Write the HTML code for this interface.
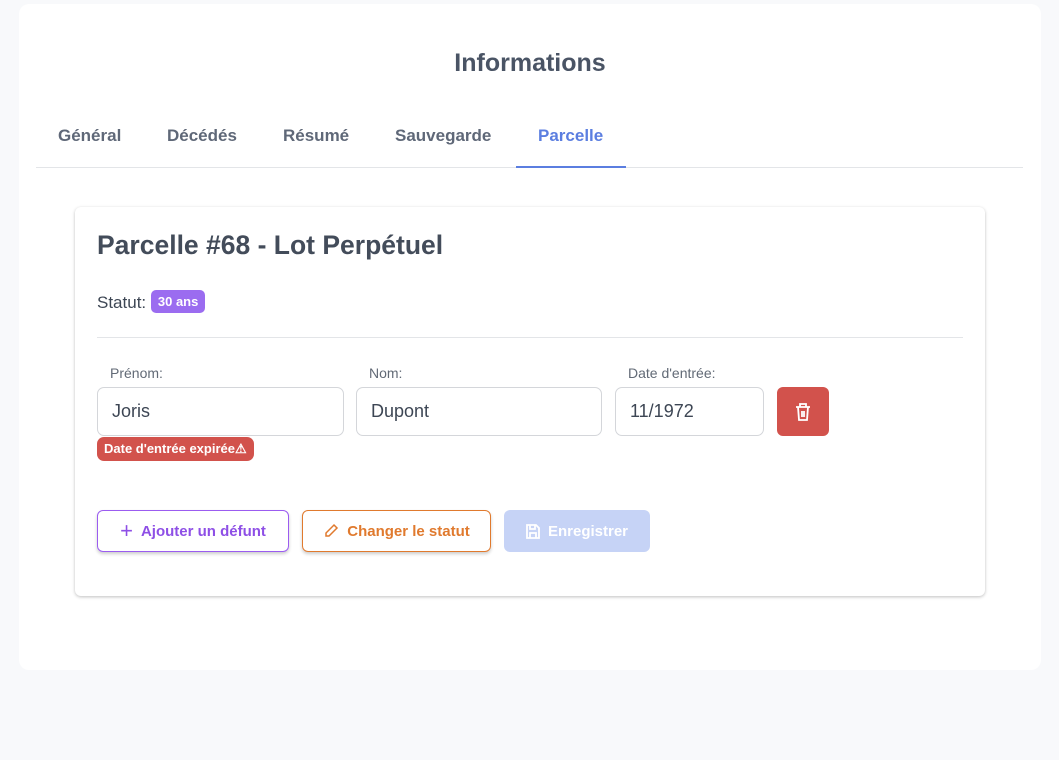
<!DOCTYPE html>
<html><head><meta charset="utf-8"><style>
*{box-sizing:border-box;margin:0;padding:0}
body{width:1059px;height:760px;background:#f8f9fb;font-family:"Liberation Sans",Arial,sans-serif;position:relative;overflow:hidden}
.main{position:absolute;left:19px;top:4px;width:1022px;height:666px;background:#fff;border-radius:10px}
h1{position:absolute;left:0;right:0;top:45px;text-align:center;font-size:25px;font-weight:bold;color:#4a5465}
.tab{position:absolute;top:122px;font-size:17px;font-weight:bold;color:#5f6878}
.tline{position:absolute;left:17px;top:163px;width:987px;height:1px;background:#e3e5e8}
.act{position:absolute;left:497px;top:162px;width:110px;height:2px;background:#5b7ee0}
.card{position:absolute;left:56px;top:203px;width:910px;height:389px;background:#fff;border-radius:6px;box-shadow:0 1px 3px rgba(0,0,0,.25)}
.abs{position:absolute}
.inp{position:absolute;top:180px;height:49px;border:1px solid #d4d6da;border-radius:7px;font-size:18px;color:#3d4654;padding:13px 14px}
.lbl{position:absolute;top:158px;font-size:14px;color:#626a76}
.btn{position:absolute;top:303px;height:42px;border-radius:6px;font-size:15px;font-weight:bold;display:flex;align-items:center;justify-content:center;gap:8px;box-shadow:0 2px 3px rgba(0,0,0,.2)}
</style></head><body>
<div class="main">
<h1>Informations</h1>
<div class="tab" style="left:39px">Général</div>
<div class="tab" style="left:148px">Décédés</div>
<div class="tab" style="left:264px">Résumé</div>
<div class="tab" style="left:376px">Sauvegarde</div>
<div class="tab" style="left:519px;color:#5b7ee0">Parcelle</div>
<div class="tline"></div><div class="act"></div>
<div class="card">
<div class="abs" style="left:22px;top:23px;font-size:26.5px;font-weight:bold;color:#434c5a">Parcelle #68 - Lot Perpétuel</div>
<div class="abs" style="left:22px;top:83px;font-size:17px;color:#3d4654">Statut: <span style="display:inline-block;background:#9b6cf0;color:#fff;font-size:13px;font-weight:bold;padding:4px 7px;border-radius:5px;vertical-align:2px">30 ans</span></div>
<div class="abs" style="left:22px;top:130px;width:866px;height:1px;background:#e3e5e8"></div>
<div class="lbl" style="left:35px">Prénom:</div>
<div class="lbl" style="left:294px">Nom:</div>
<div class="lbl" style="left:553px">Date d'entrée:</div>
<div class="inp" style="left:22px;width:247px">Joris</div>
<div class="inp" style="left:281px;width:246px">Dupont</div>
<div class="inp" style="left:540px;width:149px">11/1972</div>
<div class="abs" style="left:702px;top:180px;width:52px;height:49px;background:#d2524c;border-radius:6px;display:flex;align-items:center;justify-content:center">
<svg width="18" height="20" viewBox="0 0 18 20" fill="none" stroke="#fff" stroke-width="1.8"><path d="M2 5h14M6 5V2h6v3M4 5l1 13h8l1-13M8 9v6M10 9v6"/></svg></div>
<div class="abs" style="left:22px;top:230px;background:#d2524c;color:#fff;font-size:13px;font-weight:bold;padding:4px 7px;border-radius:7px">Date d'entrée expirée⚠</div>
<div class="btn" style="left:22px;width:192px;border:1px solid #9b5cf0;color:#8e4fe6"><span style="font-size:22px;font-weight:normal">+</span>Ajouter un défunt</div>
<div class="btn" style="left:227px;width:189px;border:1px solid #e07a2e;color:#e07a2e"><svg width="16" height="16" viewBox="0 0 16 16" fill="none" stroke="#e07a2e" stroke-width="1.5"><path d="M11 2l3 3-8 8H3v-3z"/></svg>Changer le statut</div>
<div class="btn" style="left:429px;width:146px;background:#c6d3f6;color:#fff;box-shadow:none"><svg width="14" height="15" viewBox="0 0 14 15" fill="none" stroke="#fff" stroke-width="1.8"><path d="M1 1h9l3 3v10H1zM4 1v4h5V1M4 14V9h6v5"/></svg>Enregistrer</div>
</div>
</div>
</body></html>
